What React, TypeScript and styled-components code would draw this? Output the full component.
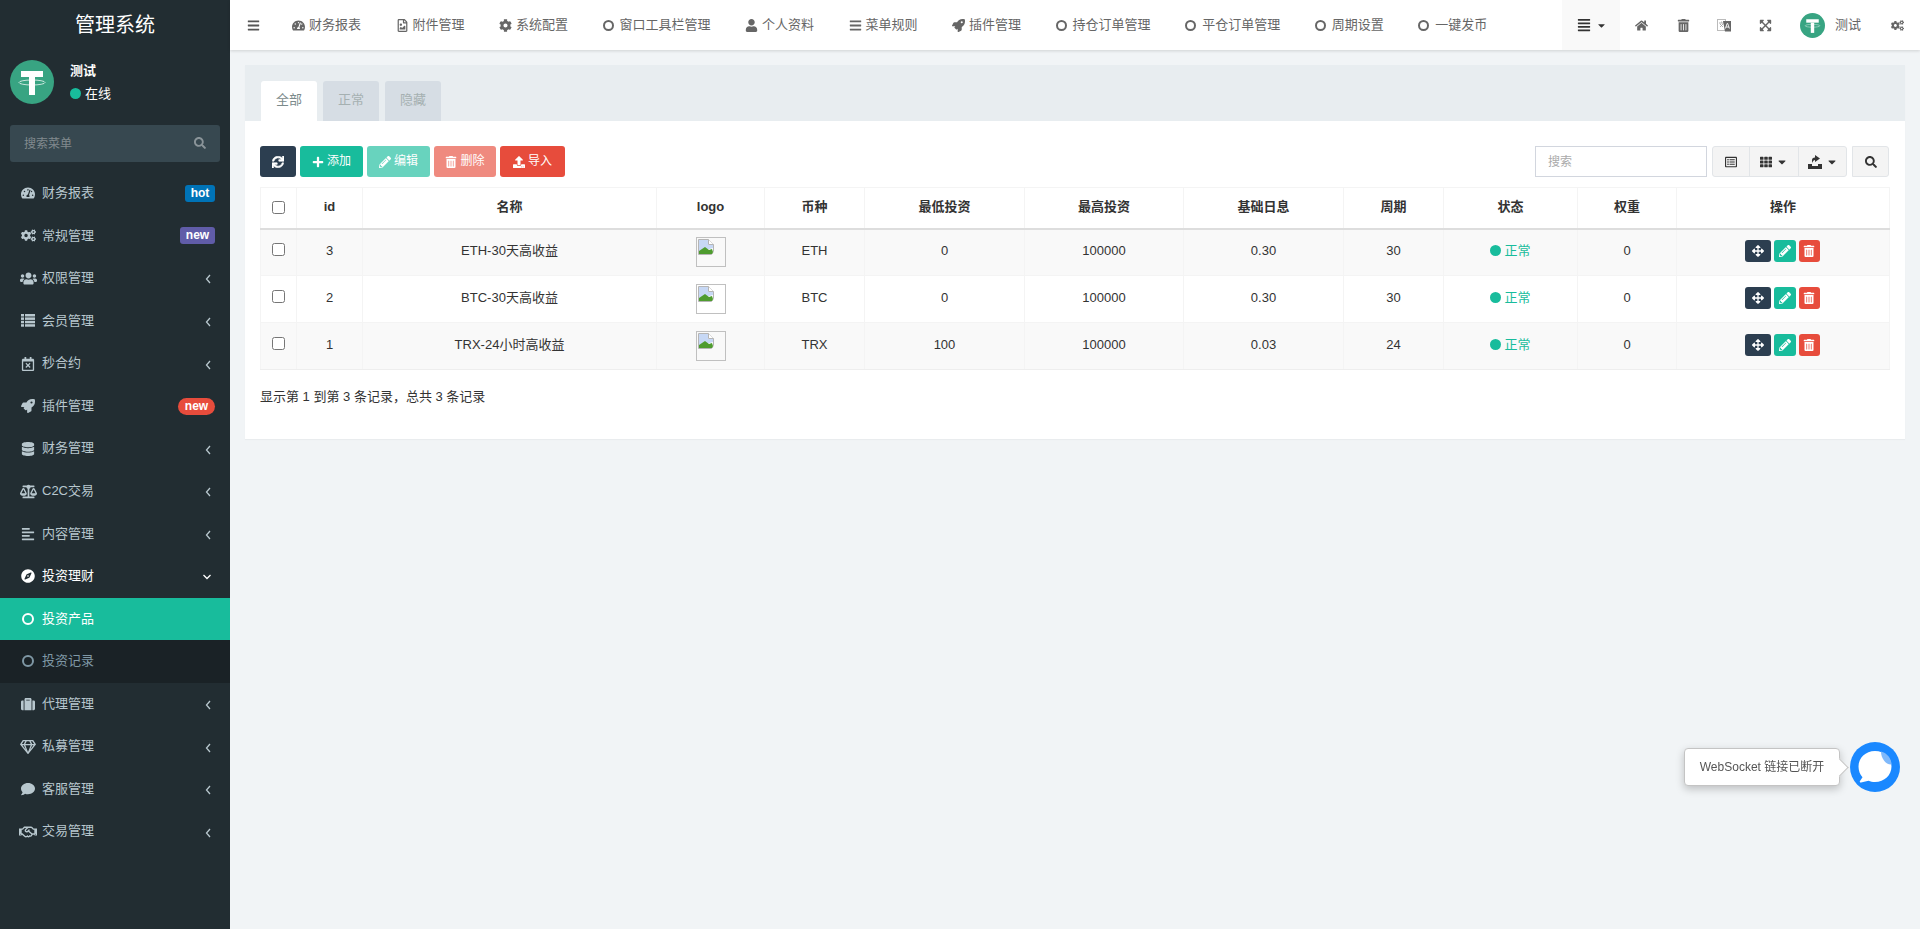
import React from 'react';
import styled, { createGlobalStyle, css } from 'styled-components';
import {
  FaAlignJustify,
  FaAlignLeft,
  FaArrowsAlt,
  FaBalanceScale,
  FaBars,
  FaCaretDown,
  FaCog,
  FaCogs,
  FaComment,
  FaCompass,
  FaDatabase,
  FaExpandArrowsAlt,
  FaHome,
  FaPencilAlt,
  FaPlus,
  FaRegCalendarTimes,
  FaRegFileImage,
  FaRegGem,
  FaRegHandshake,
  FaRegListAlt,
  FaRocket,
  FaSearch,
  FaSuitcase,
  FaSync,
  FaTachometerAlt,
  FaTh,
  FaTrashAlt,
  FaUpload,
  FaUser,
  FaUsers,
} from 'react-icons/fa';

const GlobalStyle = createGlobalStyle`
  html, body {
    margin: 0;
    padding: 0;
    background: #f1f4f6;
  }

  body {
    font-family: "Liberation Sans", "Noto Sans CJK SC", sans-serif;
    font-size: 13px;
    line-height: 1.42857;
    color: #333;
  }

  * {
    box-sizing: border-box;
  }
`;

const Shell = styled.div`
  display: flex;
  min-height: 929px;
`;

const Sidebar = styled.aside`
  flex: 0 0 230px;
  background: #222d32;
  color: #b8c7ce;
`;

const Brand = styled.div`
  height: 50px;
  line-height: 50px;
  text-align: center;
  font-size: 20px;
  color: #fff;
`;

const UserPanel = styled.div`
  display: flex;
  gap: 16px;
  padding: 10px;
  height: 75px;
`;

const UserInfo = styled.div`
  color: #fff;
  font-size: 13px;
  padding-top: 2px;

  strong {
    display: block;
    font-weight: 600;
    margin-bottom: 4px;
  }
`;

const OnlineDot = styled.span`
  display: inline-block;
  width: 11px;
  height: 11px;
  margin-right: 4px;
  border-radius: 50%;
  background: #18bc9c;
  vertical-align: -1px;
`;

const SearchBox = styled.div`
  display: flex;
  align-items: center;
  justify-content: space-between;
  height: 37px;
  margin: 0 10px 10px;
  padding: 0 14px;
  border-radius: 3px;
  background: #374850;
  color: #8a9499;

  input {
    width: 130px;
    border: 0;
    outline: 0;
    padding: 2px 0 0;
    background: transparent;
    color: #fff;
    font: inherit;
    font-size: 12px;

    &::placeholder {
      color: #818a8e;
      opacity: 1;
    }
  }

  svg {
    margin-bottom: 2px;
  }
`;

const MenuRow = styled.div<{ $active?: boolean; $open?: boolean; $sub?: boolean }>`
  display: flex;
  align-items: center;
  height: 42.57px;
  padding: 0 15px 0 18px;
  color: #b8c7ce;
  ${({ $open }) => $open && 'color: #fff;'}
  ${({ $sub }) => $sub && css`
    background: #1a2226;
    color: #7f98a5;
  `}
  ${({ $active }) => $active && css`
    background: #18bc9c;
    color: #fff;
  `}
`;

const MenuIcon = styled.span<{ $size?: number }>`
  display: flex;
  flex: 0 0 20px;
  align-items: center;
  justify-content: center;
  margin-right: 4px;
  font-size: ${({ $size }) => $size ?? 14}px;
`;

const MenuLabel = styled.span`
  flex: 1;
`;

const Badge = styled.span<{ $bg: string; $width: number; $pill?: boolean }>`
  width: ${({ $width }) => $width}px;
  border-radius: ${({ $pill }) => ($pill ? '9px' : '3px')};
  background: ${({ $bg }) => $bg};
  color: #fff;
  font-size: 12px;
  font-weight: 700;
  line-height: 17px;
  text-align: center;
`;

const ChevronSlot = styled.span`
  display: flex;
  margin: 2px 4px 0 0;
`;

const Ring = styled.span<{ $size: number }>`
  display: block;
  flex: none;
  width: ${({ $size }) => $size}px;
  height: ${({ $size }) => $size}px;
  border: 2px solid currentColor;
  border-radius: 50%;
`;

const Main = styled.div`
  flex: 1;
  min-width: 0;
`;

const Header = styled.header`
  display: flex;
  align-items: center;
  height: 50px;
  background: #fff;
  box-shadow: 0 1px 3px rgba(0, 0, 0, 0.14);
  color: #666;
`;

const Toggle = styled.span`
  display: flex;
  width: 43px;
  padding-left: 17px;
  font-size: 13px;
  color: #555;
`;

const NavList = styled.nav`
  display: flex;
  flex: 1;
  gap: 4.5px;
  margin-left: 4px;
`;

const NavItem = styled.span`
  display: flex;
  align-items: center;
  padding: 0 15px;
  white-space: nowrap;
`;

const NavIcon = styled.span`
  display: flex;
  flex: 0 0 17px;
  font-size: 13px;
  color: #666;
`;

const HeaderTools = styled.div`
  display: flex;
  align-items: center;
  height: 50px;
`;

const ListToggle = styled.span`
  display: flex;
  align-items: center;
  gap: 5px;
  width: 58px;
  height: 50px;
  margin-right: 15px;
  padding-left: 15px;
  background: #f9f9f9;
  color: #333;
  font-size: 14px;

  svg + svg {
    font-size: 11px;
  }
`;

const ToolIcon = styled.span<{ $width: number }>`
  display: flex;
  width: ${({ $width }) => $width}px;
  font-size: 13px;
  color: #666;
`;

const HeaderUser = styled.span`
  display: flex;
  align-items: center;
  gap: 10px;
  width: 91px;
`;

const Content = styled.main`
  padding: 15px;
`;

const Panel = styled.section`
  background: #fff;
  box-shadow: 0 1px 1px rgba(0, 0, 0, 0.03);
`;

const PanelHeading = styled.div`
  display: flex;
  gap: 6px;
  height: 56px;
  padding: 16px 16px 0;
  background: #e8edf0;
`;

const Tab = styled.span<{ $active?: boolean }>`
  width: 56px;
  height: 40px;
  line-height: 38px;
  text-align: center;
  border-radius: 3px 3px 0 0;
  background: ${({ $active }) => ($active ? '#fff' : '#d6dde4')};
  color: ${({ $active }) => ($active ? '#7b8a8b' : '#a5b0b1')};
`;

const PanelBody = styled.div`
  height: 318px;
  padding: 25px 16px 0 15px;
`;

const Toolbar = styled.div`
  display: flex;
  align-items: center;
  gap: 4px;
  height: 31px;
  margin-bottom: 10px;
`;

const ToolbarSearch = styled.input`
  width: 172px;
  height: 31px;
  margin-left: auto;
  margin-right: 1px;
  padding: 0 12px;
  border: 1px solid #d2d6de;
  outline: 0;
  font: inherit;
  font-size: 12px;

  &::placeholder {
    color: #aaa;
    opacity: 1;
  }
`;

const ActionButton = styled.span<{ $bg: string; $width: number; $faded?: boolean }>`
  display: flex;
  align-items: center;
  justify-content: center;
  gap: 3px;
  width: ${({ $width }) => $width}px;
  height: 31px;
  border-radius: 3px;
  background: ${({ $bg }) => $bg};
  color: #fff;
  font-size: 12px;
  ${({ $faded }) => $faded && 'opacity: 0.65;'}
`;

const GroupButton = styled.span<{ $width: number }>`
  display: flex;
  align-items: center;
  justify-content: center;
  gap: 4px;
  width: ${({ $width }) => $width}px;
  height: 31px;
  border: 1px solid #e2e5e8;
  background: #f4f4f4;
  color: #333;
  font-size: 12px;
  margin-left: -1px;

  &:first-child {
    margin-left: 0;
    border-radius: 3px 0 0 3px;
  }

  &:last-child {
    border-radius: 0 3px 3px 0;
  }
`;

const ButtonGroup = styled.div`
  display: flex;
`;

const LoneButton = styled(GroupButton)`
  border-radius: 3px;
  margin-left: 1px;
`;

const Table = styled.table`
  width: 1629px;
  table-layout: fixed;
  border-collapse: collapse;
  border: 1px solid #f4f4f4;
  text-align: center;

  th {
    height: 41px;
    padding: 0;
    border: 1px solid #f4f4f4;
    border-bottom: 2px solid #ddd;
    font-weight: 700;
    color: #333;
  }

  td {
    height: 47px;
    padding: 0 0 2px;
    border: 1px solid #f4f4f4;
    color: #333;
  }

  tbody tr:nth-child(odd) {
    background: #f9f9f9;
  }

  tbody tr:last-child td {
    border-bottom-color: #eee;
  }

  input {
    display: block;
    width: 13px;
    height: 13px;
    margin: 0 auto;
  }

  td input {
    margin-bottom: 4px;
  }
`;

const ImageBox = styled.span`
  display: block;
  width: 30px;
  height: 30px;
  margin: 2px auto 0;
  padding: 1px;
  border: 1px solid #c0c0c0;

  svg {
    display: block;
  }
`;

const StatusText = styled.span`
  color: #18bc9c;
`;

const StatusDot = styled(OnlineDot)`
  margin-right: 3px;
`;

const RowActions = styled.div`
  display: flex;
  justify-content: center;
  gap: 3px;
  padding-right: 2px;
`;

const RowButton = styled.span<{ $bg: string; $width: number }>`
  display: flex;
  align-items: center;
  justify-content: center;
  width: ${({ $width }) => $width}px;
  height: 22px;
  border-radius: 3px;
  background: ${({ $bg }) => $bg};
  color: #fff;
  font-size: 12px;
`;

const Summary = styled.p`
  margin: 17px 0 0;
  color: #333;
  line-height: 20px;
`;

const ChatWidget = styled.div`
  position: fixed;
  right: 20px;
  bottom: 137px;
  display: flex;
  align-items: center;
  gap: 10px;
`;

const ChatTip = styled.div`
  position: relative;
  width: 156px;
  height: 38px;
  line-height: 36px;
  text-align: center;
  border: 1px solid #c4c4c4;
  border-radius: 4px;
  background: #fff;
  box-shadow: 0 3px 8px rgba(0, 0, 0, 0.22);
  color: #555;
  font-size: 12px;

  &::after {
    content: '';
    position: absolute;
    top: 12px;
    right: -7px;
    width: 12px;
    height: 12px;
    background: #fff;
    border-top: 1px solid #c4c4c4;
    border-right: 1px solid #c4c4c4;
    transform: rotate(45deg);
  }
`;

const TetherLogo: React.FC<{ size: number }> = ({ size }) => (
  <svg width={size} height={size} viewBox="0 0 44 44" style={{ flex: 'none' }}>
    <circle cx="22" cy="22" r="22" fill="#38a482" />
    <rect x="11" y="11" width="22" height="6" fill="#fff" />
    <rect x="19" y="17" width="6" height="18" fill="#fff" />
    <ellipse cx="22" cy="22.5" rx="13" ry="2.5" fill="none" stroke="#fff" strokeWidth="0.9" opacity="0.8" />
  </svg>
);

const BrokenImage = () => (
  <svg width="16" height="16" viewBox="0 0 16 16">
    <path d="M0.5 0.5h10l5 5v7l-2 3h-13z" fill="#fff" stroke="#b5b5b5" />
    <path d="M1 1h9v5h5v3l-7 2-7 1z" fill="#c7d8f5" />
    <path d="M1 15v-3l6-4 4 3 3-1 1 3-1 2z" fill="#4f9c2f" />
    <path d="M10.5 0.5v5h5" fill="#fff" stroke="#b5b5b5" />
  </svg>
);

const LanguageIcon = () => (
  <svg width="14" height="15" viewBox="0 0 14 15">
    <rect x="0.5" y="1.5" width="8" height="11" fill="#fff" stroke="#bbb" />
    <path d="M2 5h5M4.500 3.500v1M3 9l3-3M3 6l3 3" stroke="#999" strokeWidth="0.8" fill="none" />
    <path d="M6 3h8v10.500H8z" fill="#666" />
    <path d="M8.400 10.500l1.700-5h.6l1.700 5M9 9h3" stroke="#fff" strokeWidth="0.9" fill="none" />
  </svg>
);

const ExportIcon = () => (
  <svg width="14" height="14" viewBox="0 0 14 14">
    <path d="M0 9h4v2h6V9h4v5H0z" fill="#333" />
    <path d="M4 8V5c0-1.500 1-2.500 3-2.500V0l5 3.500L7 7V5c-1.200 0-2 1-3 3z" fill="#333" />
  </svg>
);

const ChatIcon = () => (
  <svg width="50" height="50" viewBox="0 0 50 50" style={{ display: 'block' }}>
    <circle cx="25" cy="25" r="25" fill="#1a88ff" />
    <path d="M25 9c9.500 0 16.500 7 16.500 15.500S34.500 40 25 40c-2.500 0-4.500-.4-6.500-1.200L11 40.500c-1 .2-1.600-.8-1-1.600l2.500-3.700C10 32.500 8.500 28.800 8.500 24.500 8.500 16 15.500 9 25 9z" fill="#fff" />
    <path d="M31 9.500c6 1.500 10.500 7 10.500 13-5.500.5-10.500-6-10.500-13z" fill="#7fb9fb" />
  </svg>
);

// fa-list from the old icon set has four rows, the one in react-icons only three
const ListIcon = () => (
  <svg width="14" height="13" viewBox="0 0 14 13" fill="currentColor">
    {[0, 3.4, 6.8, 10.2].map(y => (
      <React.Fragment key={y}>
        <rect x="0" y={y} width="3" height="2.500" />
        <rect x="4" y={y} width="10" height="2.500" />
      </React.Fragment>
    ))}
  </svg>
);

const AngleLeft = () => (
  <svg width="6" height="10" viewBox="0 0 6 10">
    <path d="M5 1L1.500 5 5 9" fill="none" stroke="currentColor" strokeWidth="1.300" />
  </svg>
);

const AngleDown = () => (
  <svg width="8" height="6" viewBox="0 0 8 6" style={{ marginLeft: -2 }}>
    <path d="M0.500 1L4 4.500 7.500 1" fill="none" stroke="currentColor" strokeWidth="1.300" />
  </svg>
);

const menuItems: { label: string; icon: React.ReactNode; size?: number; badge?: React.ReactNode; arrow?: boolean }[] = [
  { label: '财务报表', icon: <FaTachometerAlt />, badge: <Badge $bg="#0073b7" $width={30}>hot</Badge> },
  { label: '常规管理', icon: <FaCogs />, size: 15, badge: <Badge $bg="#605ca8" $width={35}>new</Badge> },
  { label: '权限管理', icon: <FaUsers />, size: 17, arrow: true },
  { label: '会员管理', icon: <ListIcon />, arrow: true },
  { label: '秒合约', icon: <FaRegCalendarTimes />, arrow: true },
  { label: '插件管理', icon: <FaRocket />, badge: <Badge $bg="#e74c3c" $width={37} $pill>new</Badge> },
  { label: '财务管理', icon: <FaDatabase />, arrow: true },
  { label: 'C2C交易', icon: <FaBalanceScale />, size: 17, arrow: true },
  { label: '内容管理', icon: <FaAlignLeft />, arrow: true },
];

const lowerMenuItems = [
  { label: '代理管理', icon: <FaSuitcase />, size: 14 },
  { label: '私募管理', icon: <FaRegGem />, size: 16 },
  { label: '客服管理', icon: <FaComment />, size: 14 },
  { label: '交易管理', icon: <FaRegHandshake />, size: 18 },
];

const navItems = [
  { label: '财务报表', icon: <FaTachometerAlt /> },
  { label: '附件管理', icon: <FaRegFileImage /> },
  { label: '系统配置', icon: <FaCog /> },
  { label: '窗口工具栏管理', icon: <Ring $size={11} /> },
  { label: '个人资料', icon: <FaUser /> },
  { label: '菜单规则', icon: <FaBars /> },
  { label: '插件管理', icon: <FaRocket /> },
  { label: '持仓订单管理', icon: <Ring $size={11} /> },
  { label: '平仓订单管理', icon: <Ring $size={11} /> },
  { label: '周期设置', icon: <Ring $size={11} /> },
  { label: '一键发币', icon: <Ring $size={11} /> },
];

const columns = [
  { title: 'id', width: 66 },
  { title: '名称', width: 294 },
  { title: 'logo', width: 108 },
  { title: '币种', width: 100 },
  { title: '最低投资', width: 160 },
  { title: '最高投资', width: 159 },
  { title: '基础日息', width: 160 },
  { title: '周期', width: 100 },
  { title: '状态', width: 134 },
  { title: '权重', width: 99 },
  { title: '操作', width: 213 },
];

const products = [
  { id: 3, name: 'ETH-30天高收益', coin: 'ETH', min: 0, max: 100000, rate: '0.30', period: 30 },
  { id: 2, name: 'BTC-30天高收益', coin: 'BTC', min: 0, max: 100000, rate: '0.30', period: 30 },
  { id: 1, name: 'TRX-24小时高收益', coin: 'TRX', min: 100, max: 100000, rate: '0.03', period: 24 },
];

const App: React.FC = () => {
  return (
    <Shell>
      <GlobalStyle />
      <Sidebar>
        <Brand>管理系统</Brand>
        <UserPanel>
          <TetherLogo size={44} />
          <UserInfo>
            <strong>测试</strong>
            <OnlineDot />在线
          </UserInfo>
        </UserPanel>
        <SearchBox>
          <input placeholder="搜索菜单" />
          <FaSearch size={12} />
        </SearchBox>

        {menuItems.map(item => (
          <MenuRow key={item.label}>
            <MenuIcon $size={item.size}>{item.icon}</MenuIcon>
            <MenuLabel>{item.label}</MenuLabel>
            {item.badge}
            {item.arrow && <ChevronSlot><AngleLeft /></ChevronSlot>}
          </MenuRow>
        ))}
        <MenuRow $open>
          <MenuIcon><FaCompass /></MenuIcon>
          <MenuLabel>投资理财</MenuLabel>
          <ChevronSlot><AngleDown /></ChevronSlot>
        </MenuRow>
        <MenuRow $active>
          <MenuIcon><Ring $size={12} /></MenuIcon>
          <MenuLabel>投资产品</MenuLabel>
        </MenuRow>
        <MenuRow $sub>
          <MenuIcon><Ring $size={12} /></MenuIcon>
          <MenuLabel>投资记录</MenuLabel>
        </MenuRow>
        {lowerMenuItems.map(item => (
          <MenuRow key={item.label}>
            <MenuIcon $size={item.size}>{item.icon}</MenuIcon>
            <MenuLabel>{item.label}</MenuLabel>
            <ChevronSlot><AngleLeft /></ChevronSlot>
          </MenuRow>
        ))}
      </Sidebar>

      <Main>
        <Header>
          <Toggle><FaBars /></Toggle>
          <NavList>
            {navItems.map(item => (
              <NavItem key={item.label}>
                <NavIcon>{item.icon}</NavIcon>
                {item.label}
              </NavItem>
            ))}
          </NavList>
          <HeaderTools>
            <ListToggle><FaAlignJustify /><FaCaretDown /></ListToggle>
            <ToolIcon $width={42}><FaHome /></ToolIcon>
            <ToolIcon $width={40}><FaTrashAlt /></ToolIcon>
            <ToolIcon $width={42}><LanguageIcon /></ToolIcon>
            <ToolIcon $width={41}><FaExpandArrowsAlt /></ToolIcon>
            <HeaderUser>
              <TetherLogo size={25} />
              <span>测试</span>
            </HeaderUser>
            <ToolIcon $width={29}><FaCogs /></ToolIcon>
          </HeaderTools>
        </Header>

        <Content>
          <Panel>
            <PanelHeading>
              <Tab $active>全部</Tab>
              <Tab>正常</Tab>
              <Tab>隐藏</Tab>
            </PanelHeading>
            <PanelBody>
              <Toolbar>
                <ActionButton $bg="#2c3e50" $width={36}><FaSync style={{ stroke: 'currentColor', strokeWidth: 24 }} /></ActionButton>
                <ActionButton $bg="#18bc9c" $width={63}><FaPlus />添加</ActionButton>
                <ActionButton $bg="#18bc9c" $width={63} $faded><FaPencilAlt />编辑</ActionButton>
                <ActionButton $bg="#e74c3c" $width={62} $faded><FaTrashAlt />删除</ActionButton>
                <ActionButton $bg="#e74c3c" $width={65}><FaUpload />导入</ActionButton>
                <ToolbarSearch placeholder="搜索" />
                <ButtonGroup>
                  <GroupButton $width={38}><FaRegListAlt /></GroupButton>
                  <GroupButton $width={50}><FaTh /><FaCaretDown /></GroupButton>
                  <GroupButton $width={49}><ExportIcon /><FaCaretDown /></GroupButton>
                </ButtonGroup>
                <LoneButton $width={37}><FaSearch /></LoneButton>
              </Toolbar>

              <Table>
                <colgroup>
                  <col style={{ width: 36 }} />
                  {columns.map(col => (
                    <col key={col.title} style={{ width: col.width }} />
                  ))}
                </colgroup>
                <thead>
                  <tr>
                    <th><input type="checkbox" /></th>
                    {columns.map(col => (
                      <th key={col.title}>{col.title}</th>
                    ))}
                  </tr>
                </thead>
                <tbody>
                  {products.map(row => (
                    <tr key={row.id}>
                      <td><input type="checkbox" /></td>
                      <td>{row.id}</td>
                      <td>{row.name}</td>
                      <td><ImageBox><BrokenImage /></ImageBox></td>
                      <td>{row.coin}</td>
                      <td>{row.min}</td>
                      <td>{row.max}</td>
                      <td>{row.rate}</td>
                      <td>{row.period}</td>
                      <td><StatusText><StatusDot />正常</StatusText></td>
                      <td>0</td>
                      <td>
                        <RowActions>
                          <RowButton $bg="#2c3e50" $width={26}><FaArrowsAlt /></RowButton>
                          <RowButton $bg="#18bc9c" $width={22}><FaPencilAlt /></RowButton>
                          <RowButton $bg="#e74c3c" $width={21}><FaTrashAlt /></RowButton>
                        </RowActions>
                      </td>
                    </tr>
                  ))}
                </tbody>
              </Table>
              <Summary>显示第 1 到第 3 条记录，总共 3 条记录</Summary>
            </PanelBody>
          </Panel>
        </Content>
      </Main>

      <ChatWidget>
        <ChatTip>WebSocket 链接已断开</ChatTip>
        <ChatIcon />
      </ChatWidget>
    </Shell>
  );
};

export default App;
